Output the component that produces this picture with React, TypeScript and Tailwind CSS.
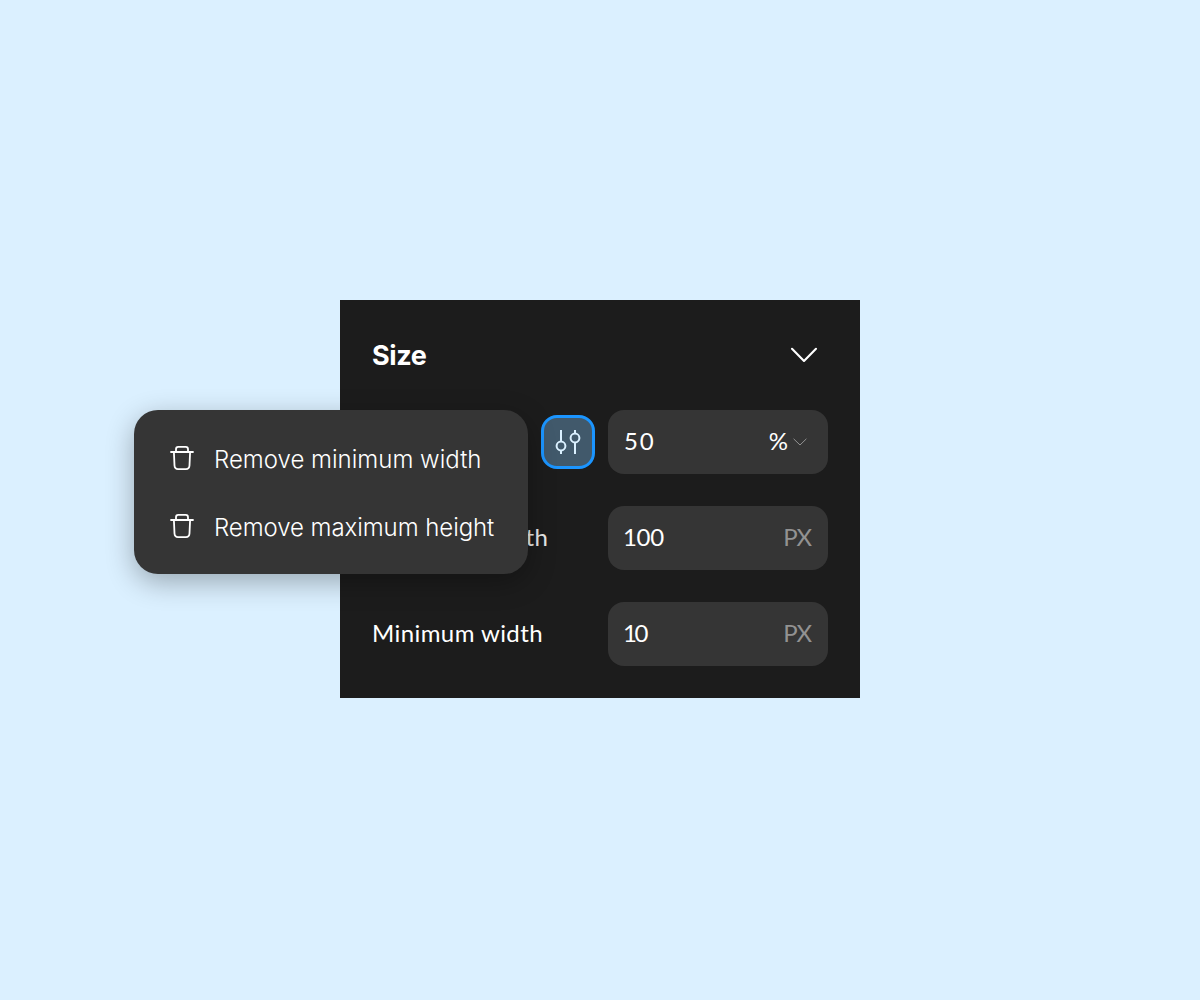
import type { ReactNode } from "react";

function TrashIcon() {
  return (
    <svg width="24" height="26" viewBox="0 0 24 26" fill="none" stroke="white" strokeWidth="1.8" strokeLinecap="round" strokeLinejoin="round">
      <path d="M1 7H23M6 7V4.2C6 2.6 7 1.8 8.2 1.8H15.8C17 1.8 18 2.6 18 4.2V7M3.9 7L4.5 20.5C4.7 23.4 6.5 24.1 8 24.1H16C17.5 24.1 19.3 23.4 19.5 20.5L20.1 7" />
    </svg>
  );
}

function Field({ value, children, valueClass }: { value: string; children: ReactNode; valueClass: string }) {
  return (
    <div className="flex h-16 w-[220px] items-center justify-between rounded-2xl bg-[#353535] px-4">
      <span className={valueClass}>{value}</span>
      {children}
    </div>
  );
}

function MenuItem({ label, labelClass }: { label: string; labelClass: string }) {
  return (
    <div className="flex h-[68px] items-center gap-5 pl-9">
      <div className="-mt-1">
        <TrashIcon />
      </div>
      <span className={labelClass}>{label}</span>
    </div>
  );
}

export default function App() {
  return (
    <main className="flex h-[1000px] w-[1200px] justify-center bg-[#dbf0ff] pt-[300px] font-['Lato',sans-serif] text-2xl text-white">
      <section className="relative h-[398px] w-[520px] bg-[#1c1c1c] px-8">
        <header className="flex h-[110px] items-center justify-between pr-[10px]">
          <h2 className="pt-0.5 font-['Inter',sans-serif] text-[27px] font-bold tracking-[-0.4px]">Size</h2>
          <svg width="28" height="16" viewBox="0 0 28 16" fill="none" stroke="white" strokeWidth="2.1" strokeLinecap="round" strokeLinejoin="round">
            <path d="M2 1.8L14 14L26 1.8" />
          </svg>
        </header>
        <div className="flex flex-col gap-8">
          <div className="flex h-16 items-center justify-end gap-[13px]">
            <button className="flex size-[54px] items-center justify-center rounded-2xl border-3 border-[#1b95ff] bg-[#41596b]" aria-label="Size constraints">
              <svg width="26" height="26" viewBox="0 0 26 26" fill="none" stroke="#daf0ff" strokeWidth="2">
                <path d="M6 1V12.5M6 21.5V25M20 1V4.5M20 13.5V25" />
                <circle cx="6" cy="17" r="4.4" />
                <circle cx="20" cy="9" r="4.4" />
              </svg>
            </button>
            <Field value="50" valueClass="pb-0.5 tracking-[1.8px]">
              <div className="flex items-center gap-[5px] pr-[5px]">
                <span className="pb-0.5">%</span>
                <svg width="14" height="8" viewBox="0 0 14 8" fill="none" stroke="#929292" strokeWidth="1">
                  <path d="M.6 .8L7 7L13.4 .8" />
                </svg>
              </div>
            </Field>
          </div>
          <div className="flex h-16 items-center justify-between">
            <span className="pb-0.5 tracking-[0.48px] text-[#e8e8e8]">Maximum width</span>
            <Field value="100" valueClass="-ml-px pb-0.5 tracking-[-0.3px]">
              <span className="mr-px pb-0.5 text-[#929292] tracking-[-1px]">PX</span>
            </Field>
          </div>
          <div className="flex h-16 items-center justify-between">
            <span className="pb-0.5 tracking-[0.42px]">Minimum width</span>
            <Field value="10" valueClass="-ml-px pb-0.5 tracking-[-2.5px]">
              <span className="mr-px pb-0.5 text-[#929292] tracking-[-1px]">PX</span>
            </Field>
          </div>
        </div>
        <div className="absolute -left-[206px] top-[110px] flex h-[164px] w-[394px] flex-col rounded-3xl bg-[#353535] pt-4 font-['Inter',sans-serif] shadow-[0_8px_28px_rgba(0,0,0,0.3)]">
          <MenuItem label="Remove minimum width" labelClass="font-light" />
          <MenuItem label="Remove maximum height" labelClass="font-light tracking-[-0.07px]" />
        </div>
      </section>
    </main>
  );
}
